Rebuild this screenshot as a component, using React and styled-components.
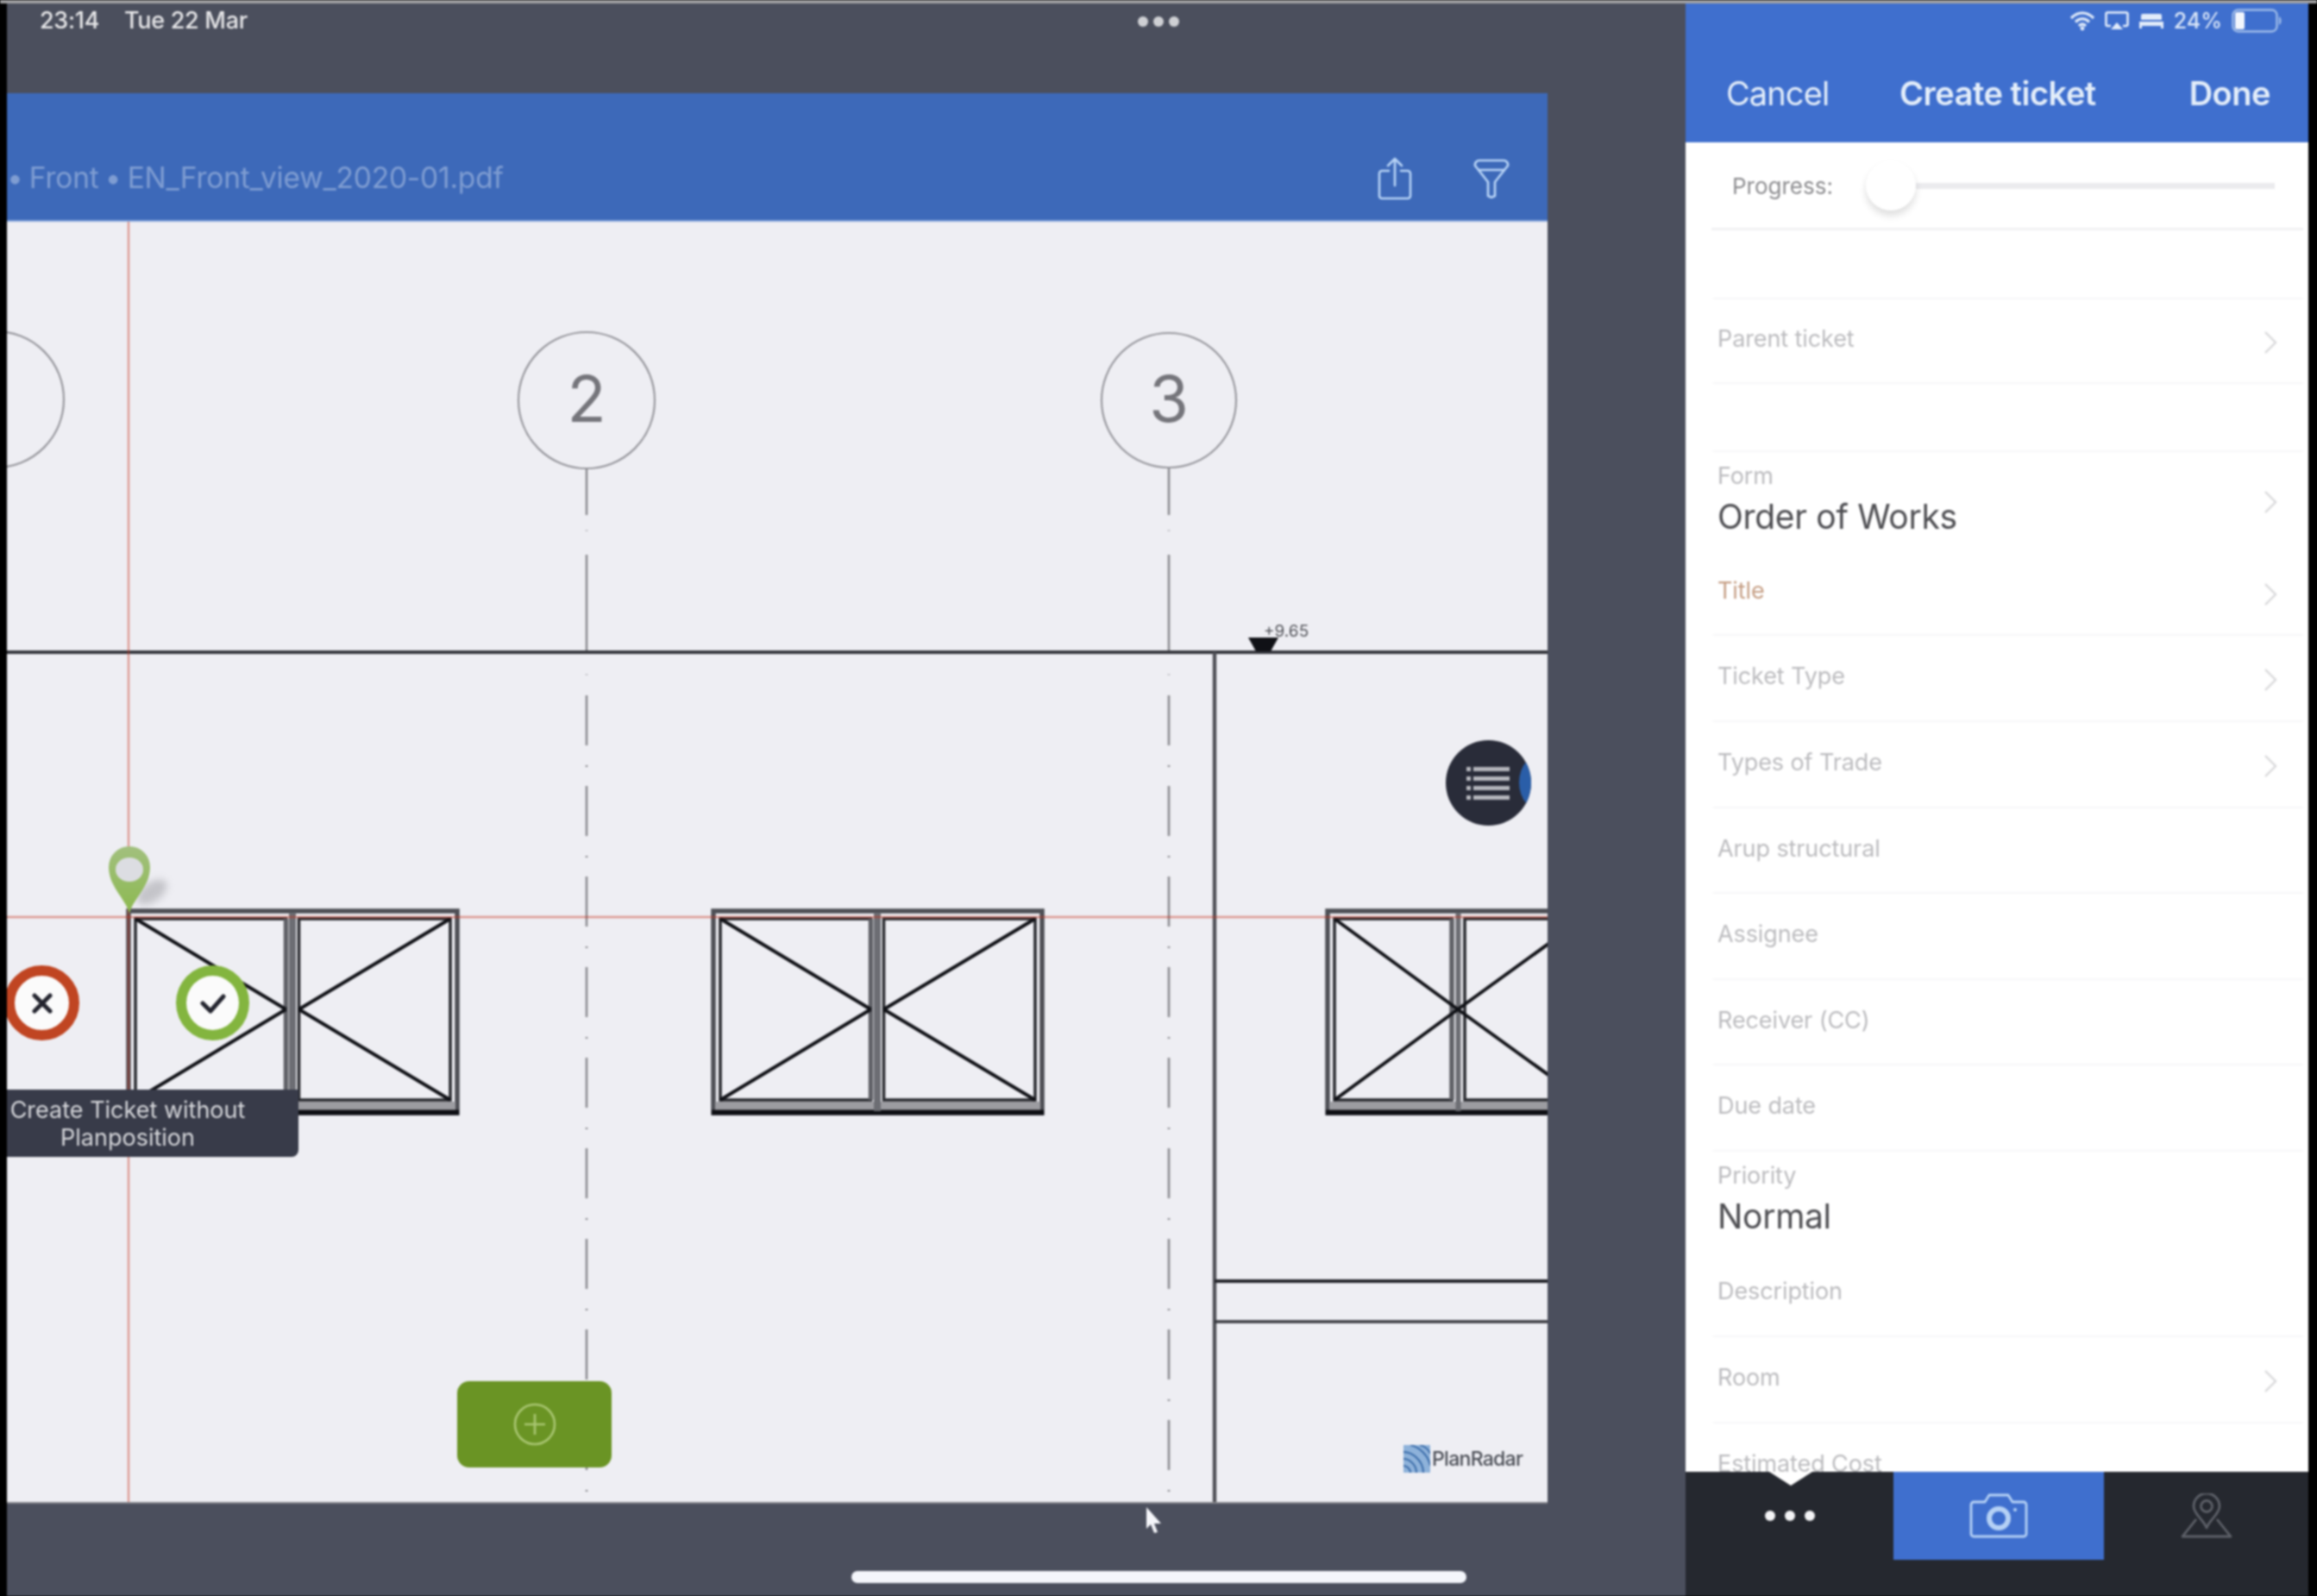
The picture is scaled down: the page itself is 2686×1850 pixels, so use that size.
import React from 'react';
import styled, { createGlobalStyle } from 'styled-components';

const Global = createGlobalStyle`
  html, body { margin: 0; padding: 0; background: #000; }
  * { box-sizing: border-box; }
`;

const FONT = `Inter, "Liberation Sans", sans-serif`;

const Root = styled.div`
  width: 2686px;
  height: 1850px;
  overflow: hidden;
  display: flex;
  flex-direction: column;
  background: #000;
  font-family: ${FONT};
  filter: blur(0.8px);
`;
const TopEdge = styled.div`height: 4px; background: #a2a2a4; flex: none;`;
const Screen = styled.div`
  flex: 1;
  display: flex;
  padding: 0 10px 0 8px;
  min-height: 0;
`;

/* left side */
const Workspace = styled.div`
  width: 1946px;
  display: flex;
  flex-direction: column;
  background: #4b4f5d;
`;
const SystemBar = styled.div`
  height: 104px;
  display: flex;
  align-items: flex-start;
  padding: 5px 0 0 38px;
  color: #e6e6e8;
  font-size: 27px;
  font-weight: 500;
  line-height: 30px;
`;
const Clock = styled.span`width: 98px; letter-spacing: -0.3px;`;
const DateText = styled.span`width: 1175px; letter-spacing: -0.3px;`;
const Grabber = styled.div`
  display: flex;
  gap: 6px;
  margin-top: 10px;
`;
const GrabberDot = styled.i`
  width: 12px;
  height: 12px;
  border-radius: 50%;
  background: #cfd0d4;
`;
const Toolbar = styled.div`
  height: 149px;
  width: 1786px;
  background: #3d69b9;
  display: flex;
  align-items: center;
  padding: 50px 0 0 0;
  border-bottom: 2px solid #86a5da;
  flex: none;
`;
const Crumbs = styled.div`
  flex: 1;
  font-size: 33.5px;
  color: #7f9dd2;
  letter-spacing: -0.2px;
  word-spacing: -2px;
  white-space: nowrap;
  padding-bottom: 2px;
`;
const ToolIcon = styled.svg`
  flex: none;
  display: block;
  fill: none;
  stroke: #b8d4f6;
  stroke-width: 2.6;
  stroke-linecap: round;
  stroke-linejoin: round;
  margin-left: ${p => p.$gap}px;
  margin-right: ${p => p.$end || 0}px;
`;

const Plan = styled.div`
  position: relative;
  width: 1786px;
  height: 1486px;
  flex: none;
  background: #eeeef3;
  overflow: hidden;
  border-bottom: 2px solid #85868c;
`;
const Drawing = styled.svg`
  display: block;
  font-family: ${FONT};
`;
const SoftShadow = styled.ellipse`
  filter: blur(4px);
`;
const ListFab = styled.div`
  position: absolute;
  left: 1668px;
  top: 601px;
  width: 99px;
  height: 99px;
  border-radius: 50%;
  background: #292c39;
  overflow: hidden;
  display: flex;
  flex-direction: column;
  justify-content: center;
  gap: 6px;
  padding-left: 24px;
  &::after {
    content: '';
    position: absolute;
    right: -46px;
    top: 14px;
    width: 60px;
    height: 70px;
    border-radius: 50%;
    background: #2a5ea8;
  }
`;
const ListLine = styled.i`
  display: block;
  width: 50px;
  height: 5px;
  background: repeating-linear-gradient(90deg, #b4b5bc 0 5px, transparent 5px 8px, #b4b5bc 8px 50px);
`;
const Ring = styled.div`
  position: absolute;
  left: ${p => p.$left}px;
  top: 862px;
  width: ${p => p.$size}px;
  height: 87px;
  border-radius: 50%;
  background: #fbfbfb;
  border: 12px solid ${p => p.$color};
  display: flex;
  align-items: center;
  justify-content: center;
`;
const RingIcon = styled.svg`
  display: block;
  fill: none;
  stroke: #23242e;
  stroke-width: 5;
  stroke-linecap: round;
  stroke-linejoin: round;
`;
const PinMark = styled.svg`
  position: absolute;
  left: 117px;
  top: 723px;
`;
const Hint = styled.div`
  position: absolute;
  left: 0;
  top: 1006px;
  width: 338px;
  height: 78px;
  background: #383b49;
  border-radius: 0 0 8px 0;
  color: #d5d6da;
  font-size: 27px;
  line-height: 32px;
  text-align: center;
  padding: 8px 58px 0 0;
  white-space: nowrap;
`;
const AddButton = styled.div`
  position: absolute;
  left: 522px;
  top: 1344px;
  width: 179px;
  height: 100px;
  background: #6a9424;
  border-radius: 14px;
  display: flex;
  align-items: center;
  justify-content: center;
`;
const Brand = styled.div`
  position: absolute;
  left: 1619px;
  top: 1418px;
  display: flex;
  align-items: center;
  gap: 2px;
  color: #4d5058;
  font-size: 23px;
  font-weight: 500;
  letter-spacing: -0.7px;
`;
const Chin = styled.div`
  flex: 1;
  position: relative;
  padding: 78px 0 0 979px;
`;
const HomeBar = styled.div`
  width: 713px;
  height: 14px;
  border-radius: 7px;
  background: #f4f6fb;
`;
const Pointer = styled.svg`
  position: absolute;
  left: 1319px;
  top: 3px;
`;

/* right side */
const Sheet = styled.div`
  width: 722px;
  display: flex;
  flex-direction: column;
  background: #fff;
  min-height: 0;
`;
const SheetHeader = styled.div`
  height: 161px;
  flex: none;
  background: #3f6fce;
  color: #e4eefa;
`;
const SheetStatus = styled.div`
  height: 44px;
  display: flex;
  align-items: center;
  justify-content: flex-end;
  padding: 0 31px 4px 0;
  font-size: 25px;
  font-weight: 500;
  color: #dbe7f8;
  gap: 11px;
`;
const StatusIcon = styled.svg`display: block; flex: none;`;
const NavRow = styled.div`
  display: flex;
  align-items: center;
  justify-content: space-between;
  padding: 37px 44px 0 47px;
  font-size: 38px;
  line-height: 46px;
`;
const NavLink = styled.span`
  font-weight: ${p => (p.$strong ? 600 : 400)};
  letter-spacing: ${p => (p.$strong ? '-0.5px' : '-0.9px')};
`;
const NavTitle = styled.span`
  font-weight: 600;
  letter-spacing: -0.5px;
  margin-right: 26px;
`;
const FormList = styled.div`
  flex: 1;
  min-height: 0;
  overflow: hidden;
`;
const ProgressRow = styled.div`
  height: 102px;
  margin: 0 6px 0 30px;
  padding: 2px 33px 0 24px;
  display: flex;
  align-items: center;
  border-bottom: 3px solid #f1f1f3;
  color: #8d8d90;
  font-size: 26px;
`;
const ProgressLabel = styled.span`width: 144px; flex: none;`;
const Slider = styled.div`
  position: relative;
  flex: 1;
  height: 7px;
  padding-left: 69px;
`;
const Track = styled.div`height: 7px; background: #ebebee;`;
const Thumb = styled.div`
  position: absolute;
  left: 11px;
  top: -26px;
  width: 58px;
  height: 58px;
  border-radius: 50%;
  background: #fff;
  box-shadow: 0 6px 9px rgba(0, 0, 0, 0.13);
`;
const Row = styled.div`
  height: ${p => p.$h}px;
  margin: 0 6px 0 32px;
  padding: 0 30px 0 5px;
  display: flex;
  align-items: center;
  justify-content: space-between;
  border-bottom: 2px solid ${p => (p.$line ? '#f7f7f8' : 'transparent')};
`;
const Field = styled.div`
  display: flex;
  flex-direction: column;
  gap: 7px;
  margin-top: ${p => (p.$tall ? 0 : -4)}px;
`;
const Label = styled.span`
  font-size: 27px;
  line-height: 30px;
  letter-spacing: -0.1px;
  color: ${p => (p.$required ? '#c69f85' : '#bcbcbf')};
`;
const Value = styled.span`
  font-size: 39px;
  line-height: 50px;
  color: #4e4e52;
  letter-spacing: -0.3px;
`;
const Chevron = styled.svg`
  display: block;
  flex: none;
  fill: none;
  stroke: #d9d9db;
  stroke-width: 2.4;
  margin-top: 4px;
`;
const TabBar = styled.div`
  height: 144px;
  flex: none;
  display: grid;
  grid-template-columns: 241px 244px 237px;
  align-items: start;
  background: #25282f;
`;
const Tab = styled.div`
  position: relative;
  height: 102px;
  display: flex;
  align-items: center;
  justify-content: center;
  gap: 11px;
  background: ${p => (p.$active ? '#3f6fce' : 'transparent')};
  ${p => p.$notch && `
    &::before {
      content: '';
      position: absolute;
      left: 97px;
      top: 0;
      border: 25px solid transparent;
      border-top: 16px solid #fff;
      border-bottom: 0;
    }
  `}
`;
const TabDot = styled.i`
  width: 12px;
  height: 12px;
  border-radius: 50%;
  background: #f4f4f6;
`;

const Win = ({ x, w, cut }) => {
  const top = 1054, bot = 1292, mid = x + w / 2 - 1;
  const pTop = 1065, pBot = 1275, cy = 1170;
  const l1 = x + 10, r1 = mid - 7, l2 = mid + 8, r2 = x + w - 10;
  const inL = cut ? mid : r1;
  const inR = cut ? mid : l2;
  return (
    <g fill="none">
      <rect x={x + 2} y={top + 2} width={w - 4} height={bot - top - 4} stroke="#4e4f55" strokeWidth="5.5" />
      <rect x={x + 4} y={1277} width={w - 8} height={10} fill="#9c9ca1" />
      <line x1={x} x2={x + w} y1={1289.500} y2={1289.500} stroke="#0e0f14" strokeWidth="6" />
      <rect x={l1} y={pTop} width={r1 - l1} height={pBot - pTop} stroke="#2a2b30" strokeWidth="3.6" />
      <rect x={l2} y={pTop} width={r2 - l2} height={pBot - pTop} stroke="#2a2b30" strokeWidth="3.6" />
      <line x1={r1} x2={r1} y1={pTop} y2={pBot} stroke="#5f6066" strokeWidth="5.5" />
      <line x1={mid + 0.5} x2={mid + 0.5} y1={1058} y2={1288} stroke="#6c6d73" strokeWidth={cut ? 6 : 8} />
      <g stroke="#101116" strokeWidth="4">
        <line x1={l1} y1={pTop} x2={inL} y2={cy} />
        <line x1={l1} y1={pBot} x2={inL} y2={cy} />
        <line x1={r2} y1={pTop} x2={inR} y2={cy} />
        <line x1={r2} y1={pBot} x2={inR} y2={cy} />
      </g>
    </g>
  );
};

const Axis = ({ x }) => (
  <g stroke="#8c8c92" strokeWidth="2.6">
    <line x1={x} x2={x} y1="543" y2="597" />
    <line x1={x} x2={x} y1="614" y2="616" stroke="#c5c5ca" />
    <line x1={x} x2={x} y1="643" y2="757" />
    <line x1={x} x2={x} y1="781" y2="783" stroke="#c5c5ca" />
    <line x1={x} x2={x} y1="806" y2="1742" strokeDasharray="58 23 2 22" />
  </g>
);

const plan = (
  <Drawing width="1786" height="1484" viewBox="8 257 1786 1484">
    <g fill="none" stroke="#98989e" strokeWidth="2.2">
      <circle cx="-5" cy="463" r="79" />
      <circle cx="680" cy="464" r="79" />
      <circle cx="1355" cy="464" r="78" />
    </g>
    <g fontSize="74" fill="#75757b" textAnchor="middle">
      <text x="680" y="489">2</text>
      <text x="1355" y="489">3</text>
    </g>
    <Axis x={680} />
    <Axis x={1355} />
    <line x1="8" x2="1794" y1="756" y2="756" stroke="#36373d" strokeWidth="4" />
    <line x1="1408" x2="1408" y1="756" y2="1742" stroke="#4e4f56" strokeWidth="4.4" />
    <line x1="1408" x2="1794" y1="1485" y2="1485" stroke="#25262c" strokeWidth="4" />
    <line x1="1408" x2="1794" y1="1532" y2="1532" stroke="#36373d" strokeWidth="3.4" />
    <path d="M1447 739h35l-9 16h-17z" fill="#101116" />
    <text x="1465" y="738" fontSize="19" fill="#55565c">+9.65</text>
    <SoftShadow cx="176" cy="1034" rx="20" ry="11" fill="#c4c4c9" transform="rotate(-35 176 1034)" />
    <Win x={147} w={385} />
    <Win x={825} w={385} />
    <Win x={1537} w={308} cut />
    <line x1="149" x2="149" y1="257" y2="1742" stroke="#c8321e" strokeOpacity="0.45" strokeWidth="2.4" />
    <line x1="8" x2="1794" y1="1063" y2="1063" stroke="#c8321e" strokeOpacity="0.45" strokeWidth="2.4" />
  </Drawing>
);

const rows = [
  { h: 80, line: true },
  { h: 98, line: true, label: 'Parent ticket', more: true },
  { h: 79, line: true },
  { h: 114, label: 'Form', value: 'Order of Works', more: true },
  { h: 99, label: 'Title', required: true, more: true, line: true },
  { h: 100, label: 'Ticket Type', more: true, line: true },
  { h: 100, label: 'Types of Trade', more: true, line: true },
  { h: 99, label: 'Arup structural', line: true },
  { h: 100, label: 'Assignee', line: true },
  { h: 99, label: 'Receiver (CC)', line: true },
  { h: 100, label: 'Due date', line: true },
  { h: 115, label: 'Priority', value: 'Normal' },
  { h: 100, label: 'Description', line: true },
  { h: 100, label: 'Room', more: true, line: true },
  { h: 100, label: 'Estimated Cost' },
];

export default function App() {
  return (
    <Root>
      <Global />
      <TopEdge />
      <Screen>
        <Workspace>
          <SystemBar>
            <Clock>23:14</Clock>
            <DateText>Tue 22 Mar</DateText>
            <Grabber><GrabberDot /><GrabberDot /><GrabberDot /></Grabber>
          </SystemBar>
          <Toolbar>
            <Crumbs>• Front • EN_Front_view_2020-01.pdf</Crumbs>
            <ToolIcon width="40" height="50" viewBox="0 0 40 50" $gap={0}>
              <path d="M13 16H5a3 3 0 0 0-3 3v26a3 3 0 0 0 3 3h30a3 3 0 0 0 3-3V19a3 3 0 0 0-3-3h-8" />
              <path d="M20 33V2M12 10l8-8 8 8" />
            </ToolIcon>
            <ToolIcon width="44" height="46" viewBox="0 0 44 46" $gap={70} $end={43}>
              <path d="M3 8a5 5 0 0 1 5-6h28a5 5 0 0 1 5 6L26 27v16l-4 2-4-2V27Z" />
              <path d="M7 13h30" />
            </ToolIcon>
          </Toolbar>
          <Plan>
            {plan}
            <ListFab>
              <ListLine /><ListLine /><ListLine /><ListLine />
            </ListFab>
            <PinMark width="50" height="80" viewBox="0 0 50 80">
              <defs>
                <linearGradient id="pinFill" x1="0" x2="0" y1="0" y2="1">
                  <stop offset="0" stopColor="#a2c07e" />
                  <stop offset="1" stopColor="#8cb950" />
                </linearGradient>
              </defs>
              <path fill="url(#pinFill)" d="M25 79C21 62 1 48 1 25a24 24 0 0 1 48 0C49 48 29 62 25 79Z" />
              <ellipse cx="25" cy="28" rx="16" ry="14" fill="#dcdde2" />
            </PinMark>
            <Ring $left={-3} $size={87} $color="#c04522">
              <RingIcon width="24" height="24" viewBox="0 0 24 24"><path d="M3 3l18 18M21 3L3 21" /></RingIcon>
            </Ring>
            <Ring $left={196} $size={85} $color="#83b53f">
              <RingIcon width="30" height="24" viewBox="0 0 30 24"><path d="M3 12l9 9L27 4" /></RingIcon>
            </Ring>
            <Hint>Create Ticket without<br />Planposition</Hint>
            <AddButton>
              <svg width="50" height="50" viewBox="0 0 50 50" fill="none" stroke="#a9c672" strokeWidth="2.6">
                <circle cx="25" cy="25" r="23" />
                <path d="M25 13v24M13 25h24" />
              </svg>
            </AddButton>
            <Brand>
              <svg width="31" height="32" viewBox="0 0 31 32" fill="none">
                <rect x="0" y="0" width="31" height="32" fill="#8eb2da" />
                <path d="M0 8c10 0 23 10 23 24M0 16c7 0 15 7 15 16M0 24c4 0 8 4 8 8M8 0c10 2 21 12 23 24M19 0c5 1 10 5 12 10" stroke="#3a6ba8" strokeWidth="2" />
              </svg>
              <span>PlanRadar</span>
            </Brand>
          </Plan>
          <Chin>
            <Pointer width="20" height="32" viewBox="0 0 20 32">
              <path d="M2 1l17 19h-8l4 10-4 1-4-10-5 5Z" fill="#f5f6fa" />
            </Pointer>
            <HomeBar />
          </Chin>
        </Workspace>
        <Sheet>
          <SheetHeader>
            <SheetStatus>
              <StatusIcon width="30" height="24" viewBox="0 0 30 24" fill="none" stroke="#e2ecfa" strokeWidth="3.2">
                <path d="M2 9c8-8 18-8 26 0M7 13.500c5-5 11-5 16 0M11 18c2.500-2.500 5.500-2.500 8 0" />
                <circle cx="15" cy="21" r="2.400" fill="#e2ecfa" stroke="none" />
              </StatusIcon>
              <StatusIcon width="28" height="22" viewBox="0 0 28 22" fill="none" stroke="#e2ecfa" strokeWidth="2.6">
                <path d="M7 17H3a1.500 1.500 0 0 1-1.500-1.500v-13A1.500 1.500 0 0 1 3 1.500h22A1.500 1.500 0 0 1 26.500 3v12.500A1.500 1.500 0 0 1 25 17h-4" />
                <path d="M14 13l7 8H7Z" fill="#e2ecfa" stroke="none" />
              </StatusIcon>
              <StatusIcon width="30" height="18" viewBox="0 0 30 18" fill="#e2ecfa">
                <path d="M5 1h20a2 2 0 0 1 2 2v5H3V3a2 2 0 0 1 2-2ZM1 10h28v5H1ZM1 15h3v3H1ZM26 15h3v3h-3Z" />
              </StatusIcon>
              <span>24%</span>
              <StatusIcon width="58" height="28" viewBox="0 0 58 28" fill="none">
                <rect x="1.500" y="1.500" width="51" height="25" rx="6" stroke="#9dbbe9" strokeWidth="2.400" />
                <rect x="4" y="4" width="11" height="20" rx="2" fill="#f2f6fd" />
                <path d="M55 9c2 1 2.500 3 2.500 5s-.5 4-2.500 5Z" fill="#9dbbe9" />
              </StatusIcon>
            </SheetStatus>
            <NavRow>
              <NavLink>Cancel</NavLink>
              <NavTitle>Create ticket</NavTitle>
              <NavLink $strong>Done</NavLink>
            </NavRow>
          </SheetHeader>
          <FormList>
            <ProgressRow>
              <ProgressLabel>Progress:</ProgressLabel>
              <Slider>
                <Track />
                <Thumb />
              </Slider>
            </ProgressRow>
            {rows.map((r, i) => (
              <Row key={i} $h={r.h} $line={r.line}>
                {r.label ? (
                  <Field $tall={!!r.value}>
                    <Label $required={r.required}>{r.label}</Label>
                    {r.value && <Value>{r.value}</Value>}
                  </Field>
                ) : <span />}
                {r.more && (
                  <Chevron width="16" height="28" viewBox="0 0 16 28"><path d="M2 2l12 12L2 26" /></Chevron>
                )}
              </Row>
            ))}
          </FormList>
          <TabBar>
            <Tab $notch><TabDot /><TabDot /><TabDot /></Tab>
            <Tab $active>
              <svg width="68" height="52" viewBox="0 0 68 52" fill="none" stroke="#b5d1f5" strokeWidth="2.800" strokeLinejoin="round">
                <path d="M5 10h13l5-8h22l5 8h13a3 3 0 0 1 3 3v34a3 3 0 0 1-3 3H5a3 3 0 0 1-3-3V13a3 3 0 0 1 3-3Z" />
                <circle cx="34" cy="29" r="11" strokeWidth="6" />
                <circle cx="53" cy="19" r="2" fill="#b5d1f5" stroke="none" />
              </svg>
            </Tab>
            <Tab>
              <svg width="60" height="52" viewBox="0 0 60 52" fill="none" stroke="#5d6068" strokeWidth="2.800" strokeLinejoin="round">
                <path d="M30 40C26 30 15 24 15 15a15 15 0 0 1 30 0C45 24 34 30 30 40Z" />
                <circle cx="30" cy="15" r="6.500" />
                <path d="M18 30L2 50h56L42 30" />
              </svg>
            </Tab>
          </TabBar>
        </Sheet>
      </Screen>
    </Root>
  );
}
